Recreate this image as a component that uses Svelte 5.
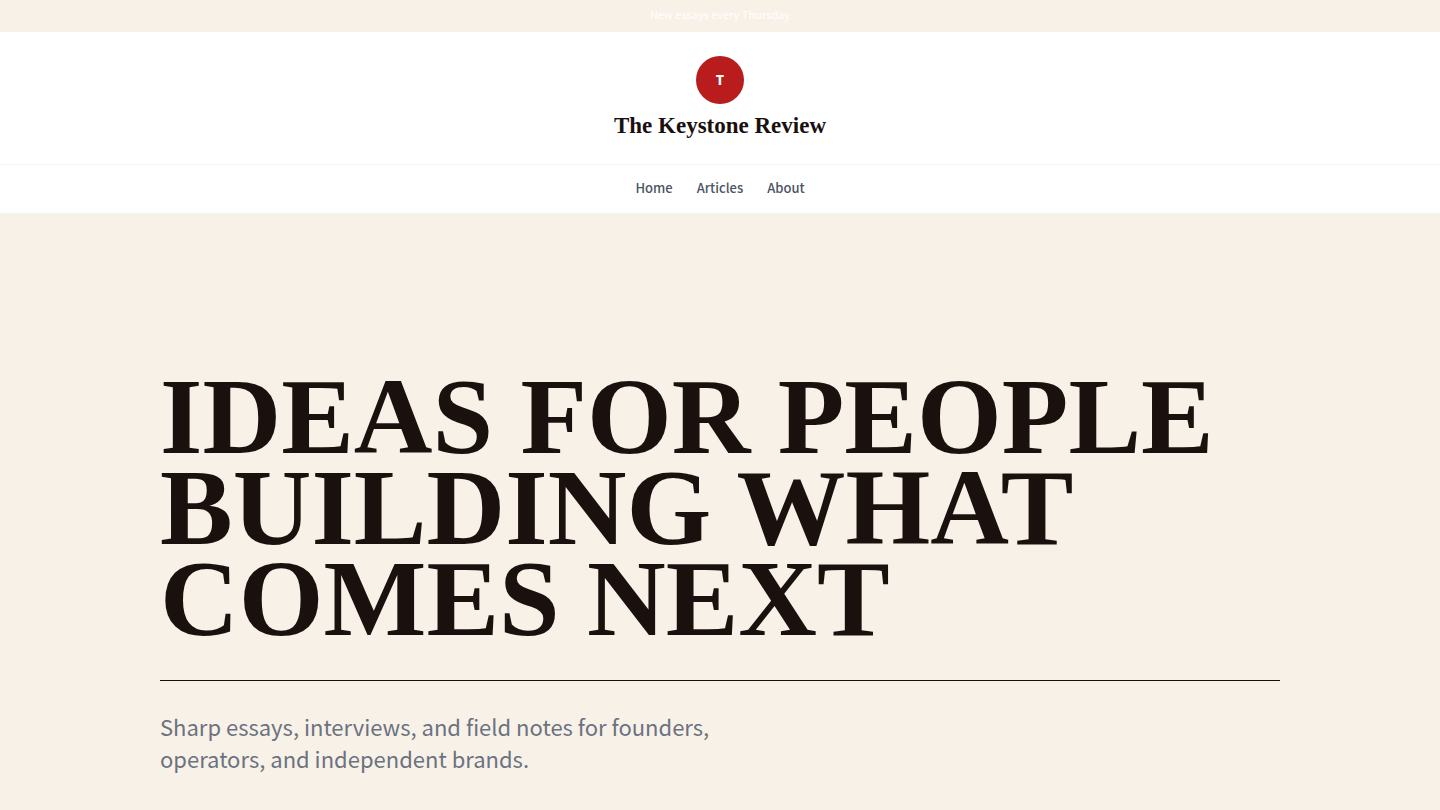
<script>
  let { name = 'The Keystone Review' } = $props();

  const announcement = 'New essays every Thursday';
  const links = [
    { label: 'Home', href: '#home' },
    { label: 'Articles', href: '#articles' },
    { label: 'About', href: '#about' }
  ];

  const initial = $derived(name.charAt(0));
</script>

<div class="page">
  <div class="announcement">{announcement}</div>

  <header class="site-header">
    <a class="brand" href="#home">
      <span class="brand-mark" aria-hidden="true">{initial}</span>
      <span class="brand-name">{name}</span>
    </a>
    <nav class="site-nav" aria-label="Main">
      {#each links as link}
        <a class="nav-link" href={link.href}>{link.label}</a>
      {/each}
    </nav>
  </header>

  <main class="hero">
    <div class="hero-inner">
      <h1 class="hero-title">Ideas for people<br />building what<br />comes next</h1>
      <p class="hero-text">
        Sharp essays, interviews, and field notes for founders, operators, and independent brands.
      </p>
    </div>
  </main>
</div>

<style>
  :global(body) {
    margin: 0;
    background: #f8f1e7;
  }

  .page {
    min-height: 100vh;
    overflow: hidden;
    box-sizing: border-box;
    background: #f8f1e7;
    color: #1a110f;
    font-family: 'Noto Sans CJK SC', 'Noto Sans', sans-serif;
  }

  .announcement {
    padding: 6px 16px 10px;
    color: #fff;
    font-size: 11px;
    line-height: 16px;
    text-align: center;
  }

  .site-header {
    background: #fff;
    border-bottom: 1px solid #f3f4f6;
  }

  .brand {
    display: flex;
    flex-direction: column;
    align-items: center;
    gap: 8px;
    padding: 24px;
    color: inherit;
    text-decoration: none;
  }

  .brand-mark {
    display: flex;
    align-items: center;
    justify-content: center;
    width: 48px;
    height: 48px;
    border-radius: 50%;
    background: #b91c1c;
    color: #fff;
    font-size: 13px;
    font-weight: 900;
    line-height: 20px;
  }

  .brand-name {
    font-family: 'Liberation Serif', serif;
    font-size: 23px;
    font-weight: 700;
    line-height: 28px;
  }

  .site-nav {
    display: flex;
    justify-content: center;
    gap: 24px;
    padding: 13px 24px 15px;
    border-top: 1px solid #f3f4f6;
  }

  .nav-link {
    color: #4b5563;
    font-size: 13px;
    font-weight: 500;
    line-height: 20px;
    text-decoration: none;
  }

  .nav-link:hover {
    color: #1a110f;
  }

  .hero {
    padding: 157px 24px 32px;
  }

  .hero-inner {
    max-width: 1120px;
    margin: 0 auto;
  }

  .hero-title {
    margin: 0;
    padding-bottom: 36px;
    border-bottom: 1px solid #1a110f;
    font-family: 'Liberation Serif', serif;
    font-size: 109px;
    font-weight: 700;
    line-height: 91px;
    text-transform: uppercase;
  }

  .hero-text {
    max-width: 576px;
    margin: 29px 0 0;
    color: #6b7280;
    font-size: 22px;
    line-height: 32px;
  }
</style>
